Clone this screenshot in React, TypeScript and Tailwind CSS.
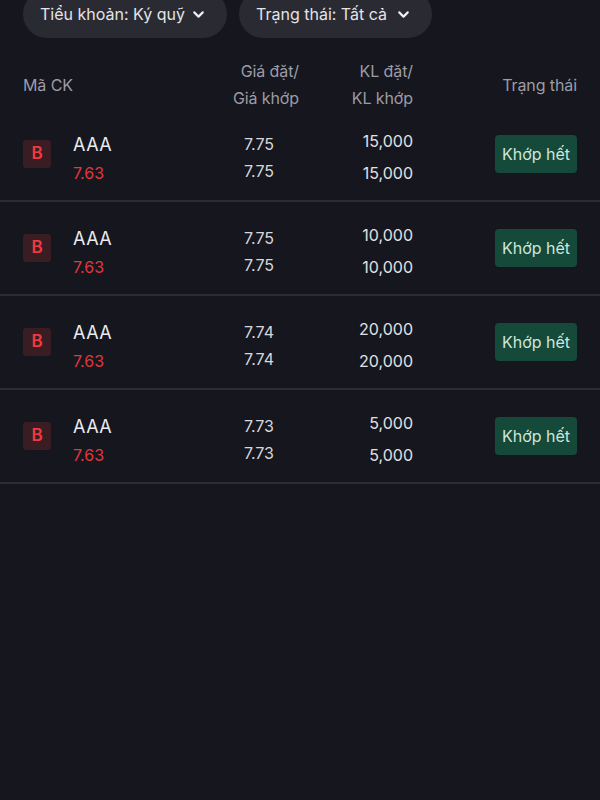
import React from 'react';
import { ChevronDown } from 'lucide-react';

type Order = {
    symbol: string;
    ref: string;
    price: string;
    matchPrice: string;
    qty: string;
    matchQty: string;
};

const orders: Order[] = [
    { symbol: 'AAA', ref: '7.63', price: '7.75', matchPrice: '7.75', qty: '15,000', matchQty: '15,000' },
    { symbol: 'AAA', ref: '7.63', price: '7.75', matchPrice: '7.75', qty: '10,000', matchQty: '10,000' },
    { symbol: 'AAA', ref: '7.63', price: '7.74', matchPrice: '7.74', qty: '20,000', matchQty: '20,000' },
    { symbol: 'AAA', ref: '7.63', price: '7.73', matchPrice: '7.73', qty: '5,000', matchQty: '5,000' },
];

const Pill: React.FC<{ label: string; className?: string }> = ({ label, className }) => (
    <button className={`h-[48px] rounded-full bg-[#2a2a33] flex items-center justify-between pl-[17px] pr-[20px] text-[16px] text-[#e4e4e8] ${className ?? ''}`}>
        <span>{label}</span>
        <ChevronDown size={17} strokeWidth={3} className="text-[#f0f0f2]" />
    </button>
);

const App: React.FC = () => {
    return (
        <div className="min-h-[800px] w-[600px] bg-[#16161e] overflow-hidden" style={{ fontFamily: 'Inter, "Noto Sans", sans-serif' }}>
            {/* Filters */}
            <div className="flex gap-[12px] px-[23px] -mt-[10px]">
                <Pill label="Tiểu khoản: Ký quỹ" className="w-[204px]" />
                <Pill label="Trạng thái: Tất cả" className="w-[193px]" />
            </div>

            {/* Header */}
            <div className="grid grid-cols-[176px_100px_114px_164px] px-[23px] mt-[20px] h-[50px] items-center text-[16px] text-[#9c9ca6] leading-[27px] tracking-[-0.1px]">
                <div>Mã CK</div>
                <div className="text-right">Giá đặt/<br />Giá khớp</div>
                <div className="text-right">KL đặt/<br />KL khớp</div>
                <div className="text-right">Trạng thái</div>
            </div>

            {/* Orders */}
            <div>
                {orders.map((o, i) => (
                    <div key={i} className="grid grid-cols-[176px_100px_114px_164px] px-[23px] h-[94px] items-center border-b-2 border-[#2b2c34]">
                        <div className="flex items-center">
                            <div className="w-[28px] h-[28px] rounded-[3px] bg-[#3a1c23] flex items-center justify-center text-[#f03a40] text-[17px] font-semibold">B</div>
                            <div className="ml-[22px] pt-[10px]">
                                <div className="text-[18px] leading-[28px] text-[#ececf0] tracking-[0.5px]">{o.symbol}</div>
                                <div className="text-[16px] leading-[28px] text-[#e0383f]">{o.ref}</div>
                            </div>
                        </div>
                        <div className="text-right pr-[25px] text-[16px] leading-[27px] text-[#d6d6dc] pt-[7px]">
                            <div>{o.price}</div>
                            <div>{o.matchPrice}</div>
                        </div>
                        <div className="text-right text-[16px] leading-[32px] text-[#e0e0e4] pt-[5px]">
                            <div>{o.qty}</div>
                            <div>{o.matchQty}</div>
                        </div>
                        <div className="flex justify-end">
                            <span className="h-[38px] px-[7px] rounded-[4px] bg-[#15493a] flex items-center text-[16px] text-[#cfe6dc]">Khớp hết</span>
                        </div>
                    </div>
                ))}
            </div>
        </div>
    );
};

export default App;
